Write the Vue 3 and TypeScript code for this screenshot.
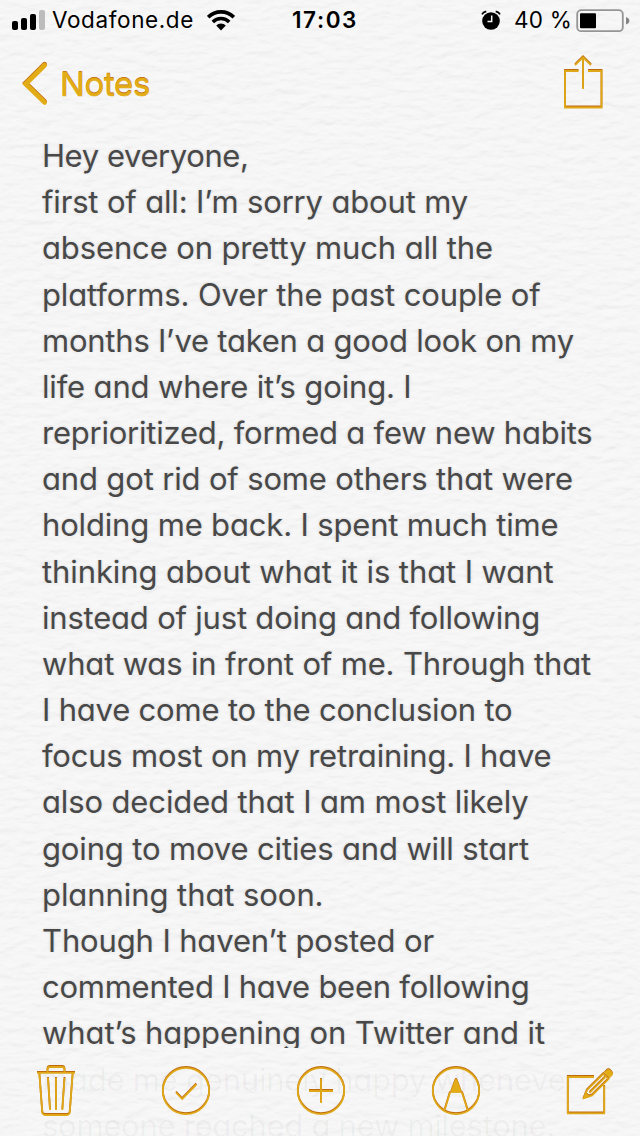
<script setup lang="ts">
import { nextTick, onMounted, ref } from 'vue'

interface Line {
  text: string
  width: number
}

const lines: Line[] = [
  { text: 'Hey everyone,', width: 206.5 },
  { text: 'first of all: I’m sorry about my', width: 426 },
  { text: 'absence on pretty much all the', width: 451 },
  { text: 'platforms. Over the past couple of', width: 498.5 },
  { text: 'months I’ve taken a good look on my', width: 532 },
  { text: 'life and where it’s going. I', width: 369.5 },
  { text: 'reprioritized, formed a few new habits', width: 550.5 },
  { text: 'and got rid of some others that were', width: 531 },
  { text: 'holding me back. I spent much time', width: 516.5 },
  { text: 'thinking about what it is that I want', width: 511.5 },
  { text: 'instead of just doing and following', width: 498 },
  { text: 'what was in front of me. Through that', width: 549 },
  { text: 'I have come to the conclusion to', width: 470.5 },
  { text: 'focus most on my retraining. I have', width: 509.5 },
  { text: 'also decided that I am most likely', width: 486.5 },
  { text: 'going to move cities and will start', width: 487 },
  { text: 'planning that soon.', width: 281.5 },
  { text: 'Though I haven’t posted or', width: 392 },
  { text: 'commented I have been following', width: 487.5 },
  { text: 'what’s happening on Twitter and it', width: 503 },
]

const underBar: Line[] = [
  { text: 'made me genuinely happy whenever', width: 535 },
  { text: 'someone reached a new milestone.', width: 513 },
]

const root = ref<HTMLElement | null>(null)

// Tracks each run of text so it fills its intended measure.
function fitText(): void {
  root.value?.querySelectorAll<HTMLElement>('[data-w]').forEach((el) => {
    el.style.letterSpacing = '0px'
    const natural = el.getBoundingClientRect().width
    const count = (el.textContent ?? '').length
    el.style.letterSpacing = `${(Number(el.dataset.w) - natural) / count}px`
  })
}

onMounted(async () => {
  await nextTick()
  fitText()
  document.fonts.ready.then(fitText)
})
</script>

<template>
  <div ref="root" class="screen">
    <svg class="paper" width="640" height="1136" aria-hidden="true">
      <filter id="grain" x="0" y="0" width="100%" height="100%" color-interpolation-filters="sRGB">
        <feTurbulence type="fractalNoise" baseFrequency="0.06 0.13" numOctaves="3" seed="8" />
        <feColorMatrix values="0 0 0 0 0  0 0 0 0 0  0 0 0 0 0  1 0 0 0 0" />
        <feDiffuseLighting surfaceScale="0.9" lighting-color="#ffffff">
          <feDistantLight azimuth="260" elevation="75" />
        </feDiffuseLighting>
      </filter>
      <rect width="640" height="1136" fill="#f6f6f6" />
      <rect width="640" height="1136" filter="url(#grain)" opacity="0.32" />
    </svg>

    <header class="status">
      <svg class="signal" width="34" height="22" viewBox="0 0 34 22">
        <rect x="0" y="12" width="6" height="9" rx="2" />
        <rect x="9" y="9" width="6" height="12" rx="2" />
        <rect x="18" y="5" width="6" height="16" rx="2" />
        <rect x="27" y="1" width="6" height="20" rx="2" fill="#bcbcbc" />
      </svg>
      <span class="carrier"><span data-w="142">Vodafone.de</span></span>
      <svg class="wifi" width="28" height="21" viewBox="0 0 28 21" fill="none" stroke="#000">
        <path d="M1.2 7.2A18 18 0 0 1 26.8 7.2" stroke-width="3.6" />
        <path d="M5.8 12A11.6 11.6 0 0 1 22.2 12" stroke-width="3.5" />
        <path d="M14 20.5L9.2 15.6A6.8 6.8 0 0 1 18.8 15.6Z" fill="#000" stroke="none" />
      </svg>
      <span class="clock"><span data-w="66">17:03</span></span>
      <svg class="alarm" width="20" height="20" viewBox="0 0 20 20">
        <circle cx="10" cy="11" r="8.8" />
        <path d="M1 4.3Q2 2.1 5.3 1.4M19 4.3Q18 2.1 14.7 1.4" fill="none" stroke="#000" stroke-width="1.7" />
        <path d="M10.7 5.5V11.5H6.5" fill="none" stroke="#f6f6f6" stroke-width="1.5" />
      </svg>
      <span class="percent"><span data-w="58">40 %</span></span>
      <svg class="battery" width="54" height="24" viewBox="0 0 54 24">
        <rect x="1.2" y="1.2" width="45.6" height="21" rx="4" fill="none" stroke="#959595" stroke-width="1.8" />
        <rect x="4" y="4.2" width="16" height="15" rx="1" />
        <path d="M50 8Q53.4 9.3 53.4 11.8T50 15.6Z" fill="#858585" />
      </svg>
    </header>

    <nav class="nav">
      <svg class="back gold" width="28" height="44" viewBox="0 0 28 44">
        <path class="chevron" d="M22.6 3.2L3.6 22L22.6 40.4" />
      </svg>
      <span class="title"><span data-w="90">Notes</span></span>
      <svg class="share gold" width="40" height="54" viewBox="0 0 40 54">
        <path d="M15.5 16H2V52.5H38.5V16H25M20 34V2.5M12 10.2L20 2.3L28 10.2" />
      </svg>
    </nav>

    <main class="note">
      <p v-for="line in lines" :key="line.text" class="line">
        <span :data-w="line.width">{{ line.text }}</span>
      </p>
    </main>

    <footer class="toolbar">
      <div class="under">
        <p v-for="line in underBar" :key="line.text" class="line">
          <span :data-w="line.width">{{ line.text }}</span>
        </p>
      </div>
      <svg class="gold" width="48" height="56" viewBox="0 0 48 56">
        <path d="M5 10.8H43M15.5 10.5V7.5Q15.5 5 18 5H30Q32.5 5 32.5 7.5V10.5M7.3 11L10.2 50Q10.5 53 13.2 53H34.8Q37.5 53 37.8 50L40.7 11M16 16L18 48M24 16V48M32.5 16L30.3 48" />
      </svg>
      <svg class="gold check" width="50" height="56" viewBox="0 0 50 56">
        <circle cx="25" cy="29" r="23.2" />
        <path d="M15 30.5L21.2 37L35.3 22.5" />
      </svg>
      <svg class="gold round" width="50" height="56" viewBox="0 0 50 56">
        <circle cx="25" cy="29" r="23.2" />
        <path d="M13 29H37M25 17V41" />
      </svg>
      <svg class="gold round" width="50" height="56" viewBox="0 0 50 56">
        <circle cx="25" cy="29" r="23.2" />
        <path class="solid" d="M24 18.2Q25 15.8 26 18.2L30.5 30.5H19.5Z" />
        <path d="M19 30.5L13.5 48.5M31 30.5L36.7 48.5" />
      </svg>
      <svg class="gold compose" width="50" height="56" viewBox="0 0 50 56">
        <path d="M31 15H4.8V51.3H41.2V24" />
        <path d="M21 36L24 28.2L40.3 11.9L45.5 17.1L29 33.4Z" />
        <path d="M26.5 30.8L42 15.3" />
        <path class="solid" d="M20.2 36.7L22.6 30.8L26.3 34.4Z" />
        <path class="solid" d="M41.5 10.5L43.5 8.3Q45.7 6.5 47.7 8.7L48.6 9.6Q50.4 11.8 48.7 13.8L46.7 15.7Z" />
      </svg>
    </footer>
  </div>
</template>

<style>
body {
  margin: 0;
  background: #f6f6f6;
}
</style>

<style scoped>
.screen {
  position: relative;
  display: flex;
  flex-direction: column;
  width: 640px;
  height: 1136px;
  overflow: hidden;
  isolation: isolate;
  background: #f6f6f6;
  font-family: Inter, "Liberation Sans", sans-serif;
  font-feature-settings: "cv11" 1;
}

.paper {
  position: absolute;
  inset: 0;
  z-index: -2;
}

svg {
  display: block;
  flex: none;
}

.status {
  display: flex;
  align-items: center;
  flex: none;
  height: 40px;
  padding-left: 12px;
  box-sizing: border-box;
  font-size: 22.5px;
  line-height: 42px;
  color: #000;
  white-space: nowrap;
  font-feature-settings: normal;
}

.signal {
  margin-top: -1px;
}

.carrier {
  width: 142px;
  margin-left: 6px;
}

.wifi {
  margin: 0 0 0 13px;
}

.clock {
  width: 66px;
  margin-left: 57px;
  font-weight: 600;
}

.alarm {
  margin: 0 0 0 123px;
}

.percent {
  width: 58px;
  margin-left: 13px;
}

.battery {
  margin: 1px 0 0 4px;
}

.nav {
  display: flex;
  flex: none;
  height: 93px;
  align-items: flex-start;
}

.gold {
  fill: none;
  stroke: #dfa818;
  stroke-width: 1.8;
  overflow: visible;
  filter: drop-shadow(0 -0.6px 0 #c06a10);
}

.solid {
  fill: #e2ac16;
  stroke-width: 0.8;
}

.back {
  margin: 22px 0 0 22px;
}

.chevron {
  stroke: #e2ac16;
  stroke-width: 4.8;
  stroke-linecap: round;
}

.title {
  width: 91px;
  margin: 24px 0 0 10px;
  font-size: 33px;
  line-height: 40px;
  color: #e2ac16;
  -webkit-text-stroke: 0.4px #e2ac16;
  text-shadow: 0 -0.8px 0 #c06a10;
  white-space: nowrap;
}

.share {
  margin: 15px 0 0 412px;
}

.note {
  flex: none;
  height: 915px;
  padding-left: 42px;
  overflow: hidden;
  color: #484848;
  text-shadow: 0 0 3px rgba(0, 0, 0, 0.16), 0 1px 1px #fff;
}

.line {
  margin: 0;
  font-size: 31px;
  line-height: 46.18px;
  height: 46.18px;
  white-space: pre;
}

.toolbar {
  position: relative;
  display: flex;
  flex: none;
  align-items: flex-start;
  height: 88px;
  padding: 14.4px 0 0 32px;
  box-sizing: border-box;
}

.check {
  margin-left: 81px;
}

.round {
  margin-left: 85px;
}

.compose {
  margin-left: 82px;
}

.under {
  position: absolute;
  left: 42px;
  top: 9px;
  z-index: -1;
  color: rgba(0, 0, 0, 0.042);
}
</style>
